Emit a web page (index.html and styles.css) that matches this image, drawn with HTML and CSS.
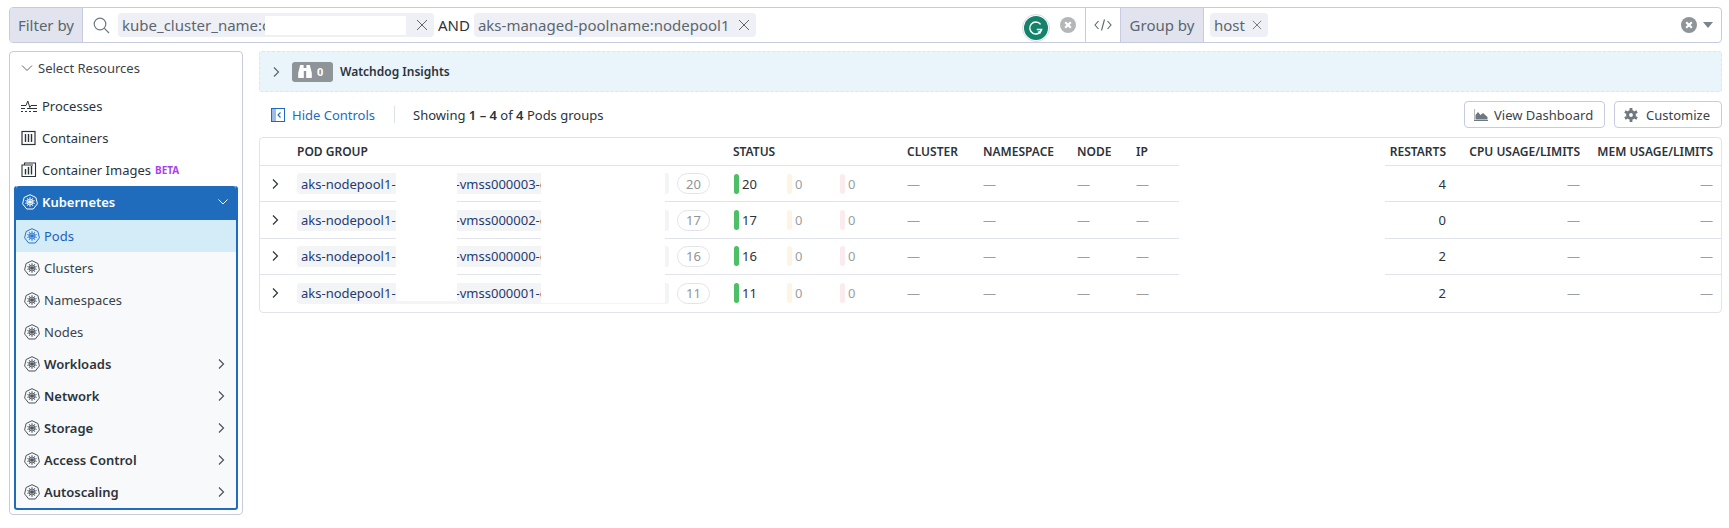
FILE: index.html

```html
<!DOCTYPE html>
<html lang="en">
<head>
  <meta charset="UTF-8">
  <title>Pods</title>
  <link rel="stylesheet" href="styles.css">
</head>
<body>
  <svg class="defs" width="0" height="0">
    <symbol id="k8s" viewBox="0 0 16 16">
      <path d="M8 .7 13.9 3.5 15.4 9.9 11.3 15H4.7L.6 9.9 2.1 3.5Z" fill="none" stroke="currentColor" stroke-width="1"/>
      <circle cx="8" cy="8" r="3" fill="none" stroke="currentColor" stroke-width=".8"/>
      <path d="M8 3V13M3.2 6.5 12.8 9.5M12.8 6.5 3.2 9.5M5 4 11 12M11 4 5 12" stroke="currentColor" stroke-width=".8"/>
      <circle cx="8" cy="8" r="1.2" fill="currentColor"/>
    </symbol>
    <symbol id="right" viewBox="0 0 10 12">
      <path d="M3 1.5 7.5 6 3 10.5" fill="none" stroke="currentColor" stroke-width="1.2"/>
    </symbol>
    <symbol id="clear" viewBox="0 0 16 16">
      <circle cx="8" cy="8" r="8" fill="currentColor"/>
      <path d="M5.2 5.2 10.8 10.8M10.8 5.2 5.2 10.8" stroke="#fff" stroke-width="2.2"/>
    </symbol>
    <symbol id="times" viewBox="0 0 12 12">
      <path d="M1 1 11 11M11 1 1 11" stroke="currentColor" stroke-width="1"/>
    </symbol>
  </svg>

  <div class="page">
    <div class="topbar">
      <div class="bar-label">Filter by</div>
      <div class="search">
        <svg class="search-icon" width="17" height="17" viewBox="0 0 17 17"><circle cx="7" cy="7" r="5.8" fill="none" stroke="currentColor" stroke-width="1.2"/><path d="M11.2 11.2 16 16" stroke="currentColor" stroke-width="1.2"/></svg>
        <span class="tag tag-cluster"><span class="tag-text">kube_cluster_name:c</span><span class="redact"></span><svg class="tag-x" width="12" height="12"><use href="#times"/></svg></span>
        <span class="and">AND</span>
        <span class="tag"><span class="tag-text">aks-managed-poolname:nodepool1</span><svg class="tag-x" width="12" height="12"><use href="#times"/></svg></span>
        <span class="grow"></span>
        <span class="grammarly">
          <svg width="24" height="24" viewBox="0 0 24 24"><circle cx="12" cy="12" r="12" fill="#15826c"/><path d="M16.6 8.4A6 6 0 1 0 17.6 13.6H12.8" fill="none" stroke="#fff" stroke-width="1.5"/><path d="M17.8 14.2 16 18.2 13.6 15.8Z" fill="#fff"/></svg>
        </span>
        <svg class="clear" width="16" height="16"><use href="#clear"/></svg>
      </div>
      <div class="code-btn">
        <svg width="18" height="12" viewBox="0 0 18 12"><path d="M4.5 2 1 6 4.5 10M13.5 2 17 6 13.5 10M10.5 .5 7.5 11.5" fill="none" stroke="currentColor" stroke-width="1.1"/></svg>
      </div>
      <div class="bar-label group-label">Group by</div>
      <div class="groupby">
        <span class="tag tag-host"><span class="tag-text">host</span><svg class="tag-x small" width="10" height="10"><use href="#times"/></svg></span>
        <span class="grow"></span>
        <svg class="clear" width="16" height="16"><use href="#clear"/></svg>
        <span class="caret"></span>
      </div>
    </div>

    <div class="layout">
      <aside class="sidebar">
        <div class="select-head">
          <svg width="12" height="8" viewBox="0 0 12 8"><path d="M1 1.5 6 6.5 11 1.5" fill="none" stroke="currentColor" stroke-width="1"/></svg>
          <span>Select Resources</span>
        </div>
        <div class="res-item">
          <svg width="16" height="16" viewBox="0 0 16 16"><path d="M0 7.5H5L6.8 3 8.8 9.5 10 7.5H16M0 10.5H4M6 10.5H16M0 13.5H2M4 13.5H6M8 13.5H10M12 13.5H16" fill="none" stroke="currentColor" stroke-width="1"/></svg>
          <span>Processes</span>
        </div>
        <div class="res-item">
          <svg width="16" height="16" viewBox="0 0 16 16"><rect x="1" y="1.5" width="13" height="13" fill="none" stroke="currentColor" stroke-width="1.2"/><path d="M4.5 4V12M7.5 4V12M10.5 4V12" stroke="currentColor" stroke-width="1.4"/></svg>
          <span>Containers</span>
        </div>
        <div class="res-item">
          <svg width="16" height="16" viewBox="0 0 16 16"><path d="M3.5 3V1H14.5V14.5H1V3H12" fill="none" stroke="currentColor" stroke-width="1.1"/><path d="M4.5 7V12.5M7.5 5V12.5M10.5 4V12.5" stroke="currentColor" stroke-width="1.4"/></svg>
          <span>Container Images</span>
          <span class="beta">BETA</span>
        </div>

        <div class="kube">
          <div class="kube-head">
            <svg width="16" height="16"><use href="#k8s"/></svg>
            <span>Kubernetes</span>
            <svg class="kube-chev" width="12" height="8" viewBox="0 0 12 8"><path d="M1.5 1.5 6 6 10.5 1.5" fill="none" stroke="currentColor" stroke-width="1"/></svg>
          </div>
          <div class="kube-item active"><svg width="16" height="16"><use href="#k8s"/></svg>Pods</div>
          <div class="kube-item"><svg width="16" height="16"><use href="#k8s"/></svg>Clusters</div>
          <div class="kube-item"><svg width="16" height="16"><use href="#k8s"/></svg>Namespaces</div>
          <div class="kube-item"><svg width="16" height="16"><use href="#k8s"/></svg>Nodes</div>
          <div class="kube-item bold"><svg width="16" height="16"><use href="#k8s"/></svg>Workloads<svg class="item-chev" width="10" height="12"><use href="#right"/></svg></div>
          <div class="kube-item bold"><svg width="16" height="16"><use href="#k8s"/></svg>Network<svg class="item-chev" width="10" height="12"><use href="#right"/></svg></div>
          <div class="kube-item bold"><svg width="16" height="16"><use href="#k8s"/></svg>Storage<svg class="item-chev" width="10" height="12"><use href="#right"/></svg></div>
          <div class="kube-item bold"><svg width="16" height="16"><use href="#k8s"/></svg>Access Control<svg class="item-chev" width="10" height="12"><use href="#right"/></svg></div>
          <div class="kube-item bold"><svg width="16" height="16"><use href="#k8s"/></svg>Autoscaling<svg class="item-chev" width="10" height="12"><use href="#right"/></svg></div>
        </div>
      </aside>

      <main class="content">
        <div class="watchdog">
          <svg class="wd-chev" width="10" height="12"><use href="#right"/></svg>
          <span class="wd-badge">
            <svg width="14" height="13" viewBox="0 0 14 13"><path d="M2.2 0H5.6V3H8.4V0H11.8L13.8 8V13H8.2V6H5.8V13H.2V8Z" fill="#fff"/></svg>
            <span>0</span>
          </span>
          <span class="wd-title">Watchdog Insights</span>
        </div>

        <div class="controls">
          <svg class="hide-icon" width="14" height="14" viewBox="0 0 14 14"><rect x=".5" y=".5" width="13" height="13" fill="none" stroke="currentColor"/><rect x="1" y="1" width="4" height="12" fill="currentColor" opacity=".45"/><path d="M9.5 4.5 7 7 9.5 9.5" fill="none" stroke="currentColor" stroke-width="1.1"/></svg>
          <span class="hide-text">Hide Controls</span>
          <span class="controls-sep"></span>
          <span class="showing">Showing <b>1 – 4</b> of <b>4</b> Pods groups</span>
          <span class="grow"></span>
          <button class="btn btn-dash">
            <svg width="14" height="12" viewBox="0 0 14 12"><path d="M0 0V11.5H14" fill="none" stroke="currentColor"/><path d="M1.5 10.5V6L4 3 6.5 6 9 4 13.5 8V10.5Z" fill="currentColor"/></svg>
            View Dashboard
          </button>
          <button class="btn btn-custom">
            <svg width="14" height="14" viewBox="0 0 14 14"><circle cx="7" cy="7" r="3.4" fill="none" stroke="currentColor" stroke-width="3"/><path d="M7 0V2.5M7 11.5V14M1 3.5 3.1 4.8M10.9 9.2 13 10.5M13 3.5 10.9 4.8M3.1 9.2 1 10.5" stroke="currentColor" stroke-width="2.8"/></svg>
            Customize
          </button>
        </div>

        <div class="table">
          <div class="row head">
            <div class="cell"></div>
            <div class="cell">POD GROUP</div>
            <div class="cell">STATUS</div>
            <div class="cell">CLUSTER</div>
            <div class="cell">NAMESPACE</div>
            <div class="cell">NODE</div>
            <div class="cell">IP</div>
            <div class="gap"></div>
            <div class="cell num">RESTARTS</div>
            <div class="cell num">CPU USAGE/LIMITS</div>
            <div class="cell num">MEM USAGE/LIMITS</div>
          </div>

          <div class="row">
            <div class="cell expand"><svg width="10" height="12"><use href="#right"/></svg></div>
            <div class="cell"><span class="pod-tag">aks-nodepool1-<span class="pod-hole"></span>-vmss000003-c</span><span class="pill">20</span></div>
            <div class="cell status"><span class="st ok">20</span><span class="st warn">0</span><span class="st err">0</span></div>
            <div class="cell dash">—</div>
            <div class="cell dash">—</div>
            <div class="cell dash">—</div>
            <div class="cell dash">—</div>
            <div class="gap"></div>
            <div class="cell num val">4</div>
            <div class="cell num dash">—</div>
            <div class="cell num dash">—</div>
          </div>

          <div class="row">
            <div class="cell expand"><svg width="10" height="12"><use href="#right"/></svg></div>
            <div class="cell"><span class="pod-tag">aks-nodepool1-<span class="pod-hole"></span>-vmss000002-c</span><span class="pill">17</span></div>
            <div class="cell status"><span class="st ok">17</span><span class="st warn">0</span><span class="st err">0</span></div>
            <div class="cell dash">—</div>
            <div class="cell dash">—</div>
            <div class="cell dash">—</div>
            <div class="cell dash">—</div>
            <div class="gap"></div>
            <div class="cell num val">0</div>
            <div class="cell num dash">—</div>
            <div class="cell num dash">—</div>
          </div>

          <div class="row">
            <div class="cell expand"><svg width="10" height="12"><use href="#right"/></svg></div>
            <div class="cell"><span class="pod-tag">aks-nodepool1-<span class="pod-hole"></span>-vmss000000-c</span><span class="pill">16</span></div>
            <div class="cell status"><span class="st ok">16</span><span class="st warn">0</span><span class="st err">0</span></div>
            <div class="cell dash">—</div>
            <div class="cell dash">—</div>
            <div class="cell dash">—</div>
            <div class="cell dash">—</div>
            <div class="gap"></div>
            <div class="cell num val">2</div>
            <div class="cell num dash">—</div>
            <div class="cell num dash">—</div>
          </div>

          <div class="row last">
            <div class="cell expand"><svg width="10" height="12"><use href="#right"/></svg></div>
            <div class="cell"><span class="pod-tag">aks-nodepool1-<span class="pod-hole"></span>-vmss000001-c</span><span class="pill">11</span></div>
            <div class="cell status"><span class="st ok">11</span><span class="st warn">0</span><span class="st err">0</span></div>
            <div class="cell dash">—</div>
            <div class="cell dash">—</div>
            <div class="cell dash">—</div>
            <div class="cell dash">—</div>
            <div class="gap"></div>
            <div class="cell num val">2</div>
            <div class="cell num dash">—</div>
            <div class="cell num dash">—</div>
          </div>

          <div class="cover cover-a"></div>
          <div class="cover cover-b"></div>
        </div>
      </main>
    </div>
  </div>
</body>
</html>
```

FILE: styles.css

```css
body {
  margin: 0;
  background-color: #fff;
  color: #2b333b;
  font-family: "Noto Sans", sans-serif;
  font-size: 13px;
}
.defs {
  position: absolute;
}
.page {
  padding: 7px 7px 0 9px;
}
.grow {
  flex: 1;
}

/* top bar */
.topbar {
  display: flex;
  height: 36px;
  box-sizing: border-box;
  border: 1px solid #c6cbe0;
  border-radius: 4px;
  color: #5b6670;
  font-size: 15px;
}
.bar-label {
  display: flex;
  align-items: center;
  justify-content: center;
  width: 73px;
  background-color: #e1e4ee;
  border-right: 1px solid #c6cbe0;
  border-radius: 3px 0 0 3px;
  box-sizing: border-box;
}
.group-label {
  width: 84px;
  border-radius: 0;
  border-left: 1px solid #c6cbe0;
}
.search {
  display: flex;
  align-items: center;
  width: 1002px;
  box-sizing: border-box;
  padding-left: 10px;
  padding-right: 9px;
}
.search-icon {
  color: #6f7880;
  margin-right: 8px;
}
.tag {
  display: inline-flex;
  align-items: center;
  height: 24px;
  padding: 0 6px 0 4px;
  background-color: #eff0f5;
  border-radius: 4px;
}
.tag-cluster {
  width: 316px;
  box-sizing: border-box;
}
.tag-text {
  white-space: nowrap;
}
.redact {
  width: 141px;
  height: 19px;
  margin-left: -4px;
  background-color: #fff;
  position: relative;
}
.tag-x {
  color: #5b6670;
  margin-left: auto;
  padding-left: 8px;
  flex: none;
}
.tag-x.small {
  padding-left: 6px;
}
.and {
  margin: 0 4px 0 4px;
  color: #2b333b;
}
.grammarly {
  display: flex;
  align-items: center;
  justify-content: center;
  width: 28px;
  height: 28px;
  margin: 5px 0 0 0;
  box-sizing: border-box;
  background-color: #fff;
  border: 1px solid #d8dbe6;
  border-radius: 50%;
  position: relative;
  z-index: 1;
}
.clear {
  color: #b4b7ba;
  margin-left: 10px;
}
.code-btn {
  display: flex;
  align-items: center;
  justify-content: center;
  width: 34px;
  border-left: 1px solid #c6cbe0;
}
.groupby {
  display: flex;
  align-items: center;
  flex: 1;
  padding: 0 8px 0 6px;
}
.tag-host {
  width: 58px;
  box-sizing: border-box;
}
.groupby .clear {
  color: #8f9499;
}
.caret {
  width: 0;
  height: 0;
  margin-left: 6px;
  border-left: 5px solid transparent;
  border-right: 5px solid transparent;
  border-top: 6px solid #7b848c;
}

/* layout */
.layout {
  display: grid;
  grid-template-columns: 234px 1fr;
  gap: 16px;
  margin-top: 8px;
  align-items: start;
}

/* sidebar */
.sidebar {
  height: 464px;
  box-sizing: border-box;
  padding: 0 4px;
  border: 1px solid #c6cbe0;
  border-radius: 4px;
}
.select-head {
  display: flex;
  align-items: center;
  gap: 5px;
  height: 32px;
  margin-bottom: 6px;
  padding-left: 7px;
  color: #3a434b;
}
.select-head svg {
  color: #5b6670;
}
.res-item {
  display: flex;
  align-items: center;
  gap: 5px;
  height: 32px;
  padding-left: 7px;
}
.beta {
  margin-left: -1px;
  color: #a93ff0;
  font-size: 10px;
  font-weight: 700;
}
.kube {
  border: 2px solid #1f6cbd;
  border-top: 0;
  border-radius: 3px;
  background-color: #f8f9fb;
  height: 324px;
  box-sizing: border-box;
}
.kube-head {
  display: flex;
  align-items: center;
  gap: 4px;
  height: 34px;
  box-sizing: border-box;
  padding: 0 7px 2px 6px;
  background-color: #1f6cbd;
  border-radius: 3px 3px 0 0;
  color: #fff;
  font-weight: 600;
}
.kube-chev {
  margin-left: auto;
}
.kube-item {
  display: flex;
  align-items: center;
  gap: 4px;
  height: 32px;
  padding-left: 8px;
  padding-right: 10px;
  color: #3a434b;
}
.kube-item svg {
  color: #4a535b;
}
.kube-item.active {
  background-color: #d4ebf8;
  color: #1c5fbe;
}
.kube-item.active svg {
  color: #2a74cf;
}
.kube-item.bold {
  font-weight: 600;
  color: #2b333b;
}
.kube-item .item-chev {
  margin-left: auto;
}

/* main area */
.watchdog {
  display: flex;
  align-items: center;
  height: 41px;
  box-sizing: border-box;
  padding-left: 11px;
  background-color: #e9f4fb;
  border: 1px dashed #dfe6ea;
  border-radius: 3px;
}
.wd-chev {
  color: #5b6670;
}
.wd-badge {
  display: inline-flex;
  align-items: center;
  gap: 5px;
  margin-left: 11px;
  padding-left: 6px;
  width: 41px;
  height: 20px;
  box-sizing: border-box;
  background-color: #8f9499;
  border-radius: 3px;
  color: #fff;
  font-size: 11px;
  font-weight: 700;
}
.wd-title {
  margin-left: 7px;
  font-size: 12px;
  font-weight: 600;
}
.controls {
  display: flex;
  align-items: center;
  height: 27px;
  margin-top: 9px;
  margin-bottom: 9px;
}
.hide-icon {
  margin-left: 12px;
  color: #1d6cc0;
}
.hide-text {
  margin-left: 7px;
  color: #1d6cc0;
}
.controls-sep {
  width: 1px;
  height: 17px;
  margin: 0 18px 0 19px;
  background-color: #dfe2ea;
}
.showing b {
  font-weight: 600;
}
.btn {
  display: inline-flex;
  align-items: center;
  gap: 6px;
  height: 27px;
  padding: 0 9px;
  margin-left: 9px;
  background-color: #fff;
  border: 1px solid #c6cbe0;
  border-radius: 4px;
  color: #3a434b;
  font-family: inherit;
  font-size: 13px;
}
.btn svg {
  color: #6f7880;
}
.btn-dash {
  width: 141px;
}
.btn-custom {
  width: 108px;
  gap: 8px;
}

/* table */
.table {
  position: relative;
  border: 1px solid #e2e4ec;
  border-radius: 4px;
  height: 176px;
  box-sizing: border-box;
}
.row {
  display: grid;
  grid-template-columns: 37px 436px 174px 76px 94px 59px 43px 206px 69px 134px 133px;
  height: 36.4px;
}
.row.head {
  height: 28px;
  font-size: 12px;
  font-weight: 600;
}
.cell {
  display: flex;
  align-items: center;
  border-bottom: 1px solid #e2e4ec;
  box-sizing: border-box;
  white-space: nowrap;
  min-width: 0;
}
.row.last .cell {
  border-bottom: 0;
}
.num {
  justify-content: flex-end;
  padding-right: 8px;
}
.expand {
  padding-left: 10px;
  color: #2b333b;
}
.pod-tag {
  display: flex;
  align-items: center;
  width: 372px;
  height: 21px;
  box-sizing: border-box;
  padding-left: 4px;
  background-color: #f3f4f6;
  border-radius: 3px;
  color: #1f3b73;
  overflow: hidden;
}
.pod-hole {
  width: 60px;
  flex: none;
}
.pill {
  display: inline-flex;
  align-items: center;
  justify-content: center;
  width: 33px;
  height: 21px;
  box-sizing: border-box;
  margin-left: 8px;
  border: 1px solid #e2e4ec;
  border-radius: 11px;
  color: #8f9499;
}
.status {
  padding-left: 1px;
}
.st {
  display: inline-flex;
  align-items: center;
  width: 53px;
  color: #9a9fa4;
}
.st::before {
  content: "";
  width: 5px;
  height: 20px;
  margin-right: 3px;
  border-radius: 3px;
}
.st.ok {
  color: #2b333b;
}
.st.ok::before {
  background-color: #4dbf66;
}
.st.warn::before {
  background-color: #fdf4e3;
}
.st.err::before {
  background-color: #fbebee;
}
.dash {
  color: #9a9fa4;
}
.val {
  color: #2b333b;
}

/* white blocks hiding names */
.cover {
  position: absolute;
  background-color: #fff;
  top: 29px;
}
.cover-a {
  left: 136px;
  width: 61px;
  height: 134px;
}
.cover-b {
  left: 281px;
  width: 124px;
  height: 136px;
}
```
